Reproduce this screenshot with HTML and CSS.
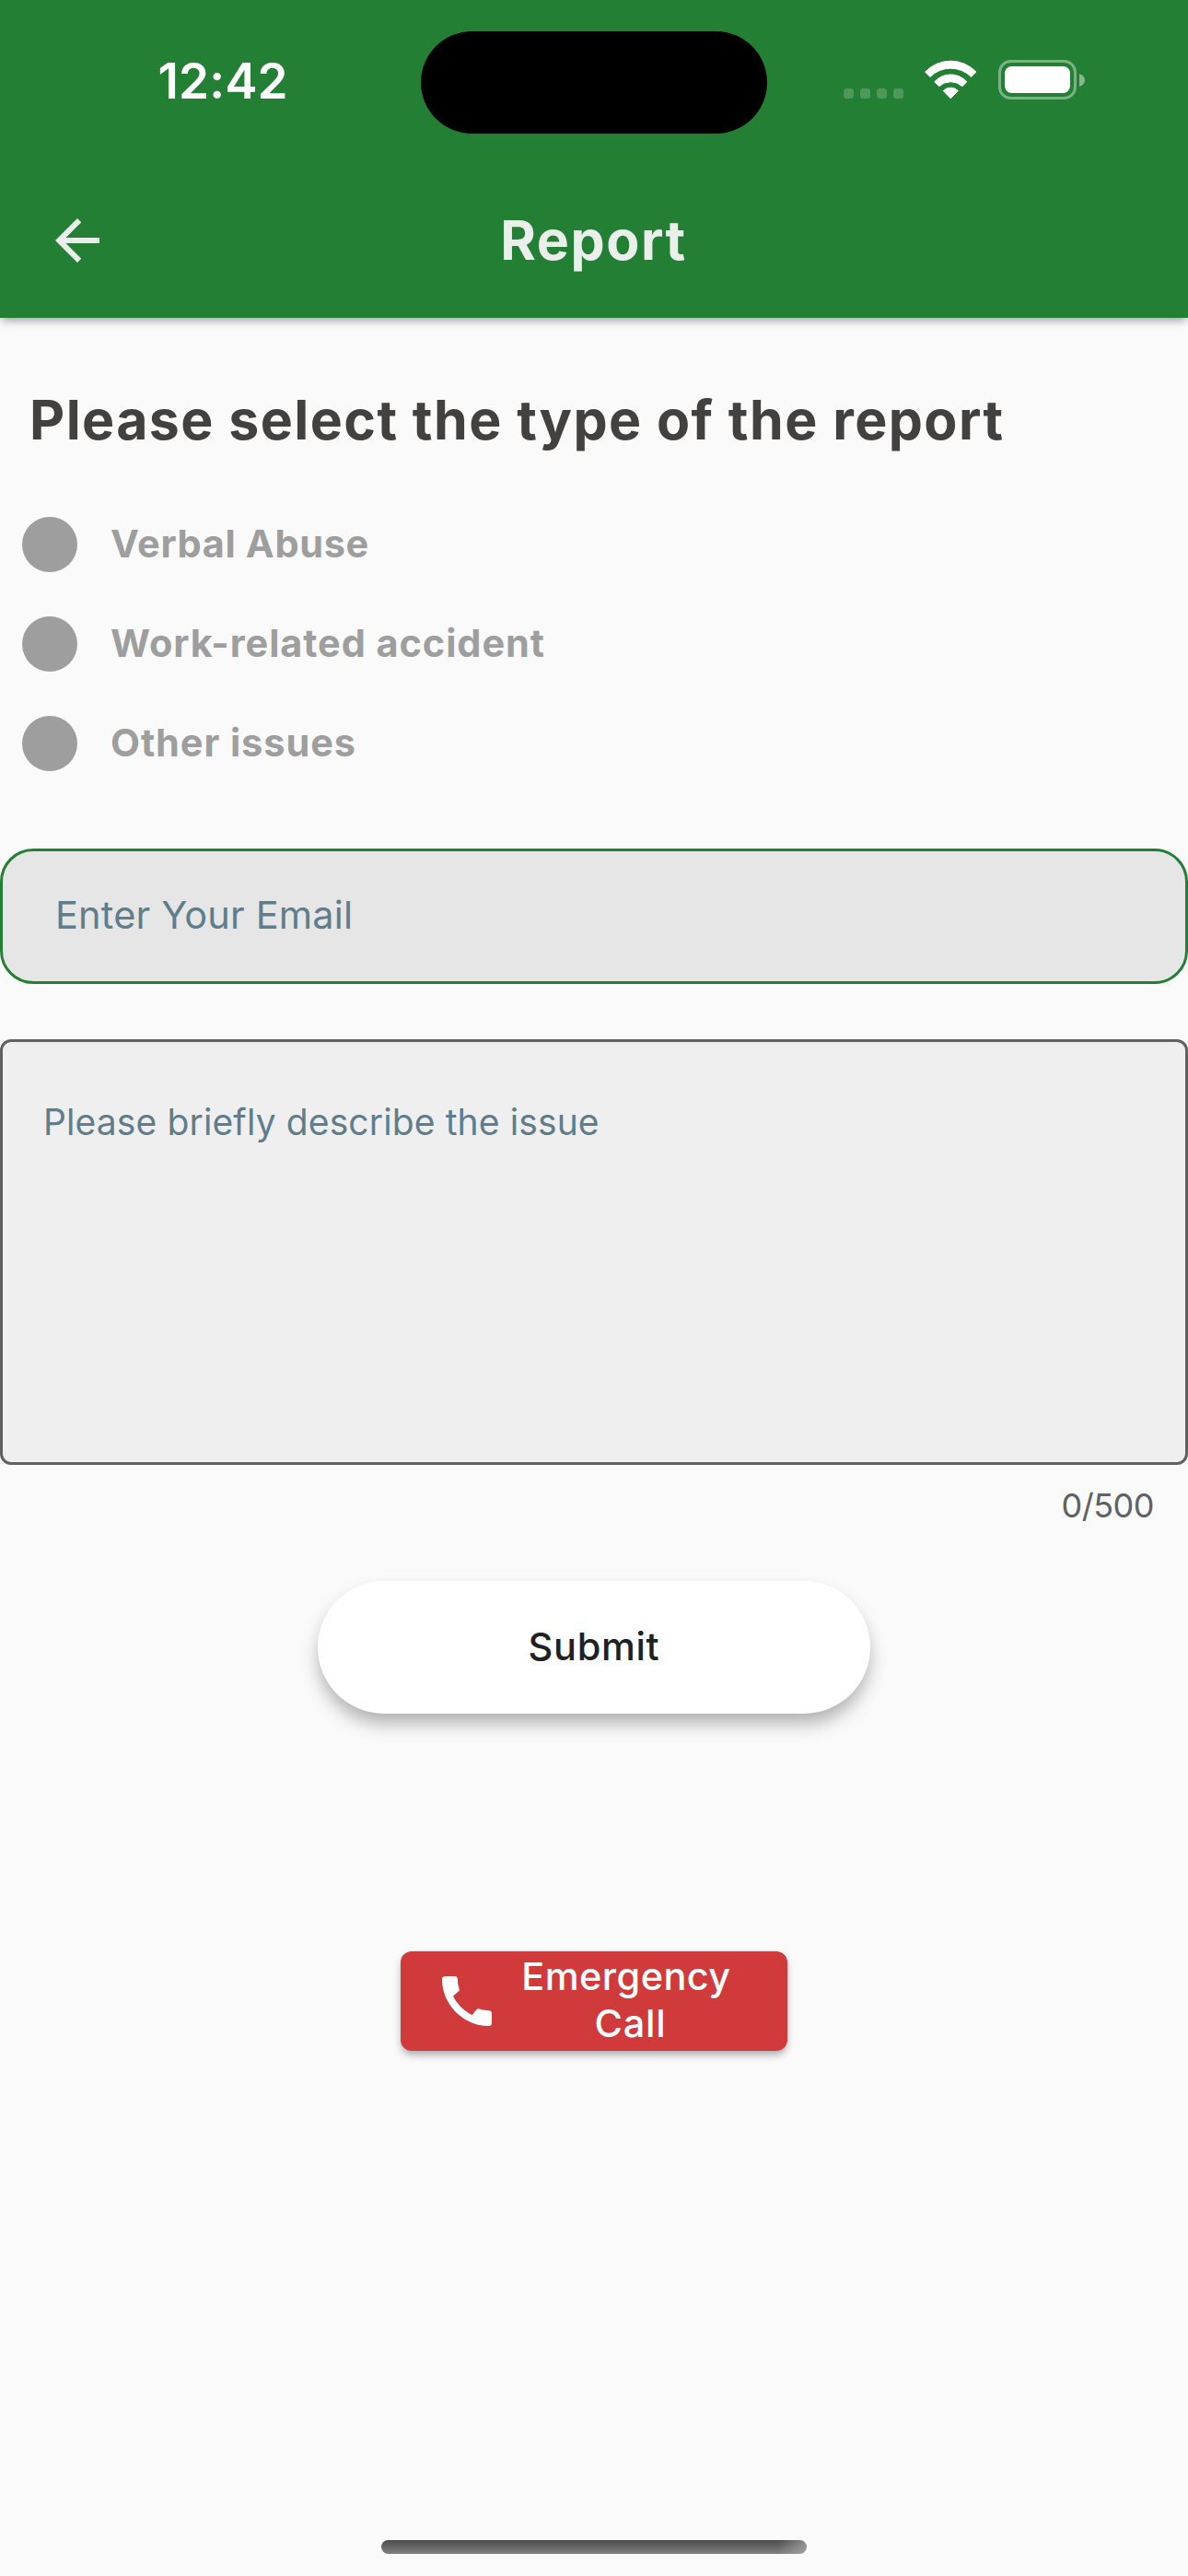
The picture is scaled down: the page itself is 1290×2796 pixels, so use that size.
FILE: index.html
```html
<!DOCTYPE html>
<html lang="en">
<head>
<meta charset="utf-8">
<title>Report</title>
<link rel="stylesheet" href="styles.css">
</head>
<body>
<div class="screen">
  <header class="header">
    <div class="status">
      <span class="time">12:42</span>
      <span class="island"></span>
      <svg class="indicators" width="264" height="46" viewBox="0 0 264 46">
        <g fill="#fff" fill-opacity=".2">
          <rect x="1" y="32" width="11" height="11" rx="3.5"/>
          <rect x="19" y="32" width="11" height="11" rx="3.5"/>
          <rect x="37" y="32" width="11" height="11" rx="3.5"/>
          <rect x="55" y="32" width="11" height="11" rx="3.5"/>
        </g>
        <g fill="#fff" stroke="#fff" stroke-linejoin="round">
          <path d="M89.6 14.1A38.2 38.2 0 0 1 145 14.1L139.6 19.4A31.5 31.5 0 0 0 95 19.4Z"/>
          <path d="M99.7 24.8A23.6 23.6 0 0 1 134.9 24.8L129.9 29.7A18.5 18.5 0 0 0 104.7 29.7Z"/>
          <path d="M109.3 34.6A11 11 0 0 1 125.3 34.6L117.3 42.800Z"/>
        </g>
        <rect x="170.500" y="2.500" width="82" height="40" rx="12" fill="none" stroke="#fff" stroke-opacity=".4" stroke-width="3"/>
        <rect x="176" y="8" width="71" height="29" rx="7.500" fill="#fff"/>
        <path d="M257 16C265 18.500 265 27.500 257 30Z" fill="#fff" fill-opacity=".45"/>
      </svg>
    </div>
    <div class="appbar">
      <svg class="back" width="72" height="72" viewBox="0 0 24 24"><path d="M20 11H7.830l5.590-5.590L12 4l-8 8 8 8 1.410-1.410L7.830 13H20v-2z" fill="#ebefec"/></svg>
      <h1 class="title">Report</h1>
    </div>
  </header>

  <main class="content">
    <h2 class="question">Please select the type of the report</h2>
    <ul class="options">
      <li class="option verbal"><i class="radio"></i><span>Verbal Abuse</span></li>
      <li class="option accident"><i class="radio"></i><span>Work-related accident</span></li>
      <li class="option other"><i class="radio"></i><span>Other issues</span></li>
    </ul>
    <div class="email">Enter Your Email</div>
    <div class="description">Please briefly describe the issue</div>
    <div class="counter">0/500</div>
    <div class="submit">Submit</div>
    <div class="emergency">
      <svg class="phone" width="72" height="72" viewBox="0 0 24 24"><path d="M20.010 15.380c-1.230 0-2.420-.2-3.530-.56-.35-.12-.74-.03-1.010.24l-1.570 1.970c-2.830-1.350-5.480-3.900-6.890-6.830l1.950-1.660c.27-.28.35-.67.24-1.020-.37-1.110-.56-2.300-.56-3.530 0-.54-.45-.99-.99-.99H4.190C3.650 3 3 3.240 3 3.990 3 13.280 10.730 21 20.010 21c.71 0 .99-.63.99-1.180v-3.450c0-.54-.45-.99-.99-.99z" fill="#fff"/></svg>
      <div class="emergency-text">
        <span>Emergency</span>
        <span class="second-line">Call</span>
      </div>
    </div>
  </main>
  <div class="home"></div>
</div>
</body>
</html>
```
FILE: styles.css
```css
* { box-sizing: border-box; }
body {
  margin: 0;
  background: #fafafa;
  font-family: Inter, "Liberation Sans", sans-serif;
}
.screen {
  width: 1290px;
  height: 2796px;
  display: flex;
  flex-direction: column;
  overflow: hidden;
  background: #fafafa;
}
.header {
  height: 345px;
  flex: none;
  background: #237f34;
  box-shadow: 0 5px 9px -2px rgba(0, 0, 0, .36);
}
.status {
  height: 177px;
  display: grid;
  grid-template-columns: 457px 376px 1fr;
  align-items: center;
}
.time {
  padding: 0 0 2px 171.5px;
  color: #fff;
  font-size: 53px;
  font-weight: 600;
  letter-spacing: .1px;
}
.island {
  height: 111px;
  margin-top: 1px;
  border-radius: 56px;
  background: #000;
}
.indicators {
  margin: 0 0 3px 82px;
}
.appbar {
  height: 168px;
  padding: 0 48px;
  display: grid;
  grid-template-columns: 72px 1fr 72px;
  align-items: center;
}
.title {
  margin: 0;
  padding: 0 1px 2px 0;
  text-align: center;
  color: #ebefec;
  font-size: 59px;
  font-weight: 700;
  letter-spacing: 1.5px;
}
.content {
  flex: 1;
  display: flex;
  flex-direction: column;
}
.question {
  margin: 75px 0 0 32px;
  color: #424140;
  font-size: 59px;
  line-height: 72px;
  font-weight: 700;
  letter-spacing: 1.42px;
  white-space: nowrap;
}
.options {
  margin: 69px 0 0;
  padding: 0 24px;
  list-style: none;
  display: flex;
  flex-direction: column;
  gap: 48px;
}
.option {
  height: 60px;
  display: flex;
  align-items: center;
  gap: 36px;
  color: #9e9e9e;
  font-size: 41.5px;
  font-weight: 700;
}
.option span { padding-bottom: 2px; }
.verbal { letter-spacing: .62px; }
.accident { letter-spacing: .92px; }
.other { letter-spacing: .9px; }
.radio {
  width: 60px;
  height: 60px;
  border-radius: 50%;
  background: #9e9e9e;
}
.email {
  height: 147px;
  margin-top: 84px;
  padding: 0 57px;
  border: 3px solid #237f34;
  border-radius: 36px;
  background: #e6e6e6;
  color: #607d8b;
  font-size: 41.5px;
  line-height: 138px;
  letter-spacing: .17px;
}
.description {
  height: 462px;
  margin-top: 60px;
  padding: 62px 44px;
  border: 3px solid #616161;
  border-radius: 12px;
  background: #efefef;
  color: #607d8b;
  font-size: 39px;
  line-height: 50px;
  letter-spacing: .12px;
}
.counter {
  margin: 20px 37px 0 0;
  text-align: right;
  color: #616161;
  font-size: 36px;
  line-height: 48px;
  letter-spacing: -.5px;
}
.submit {
  align-self: center;
  width: 600px;
  height: 144px;
  margin-top: 58px;
  border-radius: 72px;
  background: #fff;
  box-shadow: 0 12px 20px -2px rgba(0, 0, 0, .31);
  text-align: center;
  color: #212121;
  font-size: 41.5px;
  line-height: 142px;
  font-weight: 500;
  letter-spacing: .65px;
}
.emergency {
  align-self: center;
  width: 420px;
  height: 108px;
  margin-top: 258px;
  padding-left: 36px;
  display: flex;
  align-items: center;
  gap: 22px;
  border-radius: 12px;
  background: #d13a3b;
  box-shadow: 0 5px 9px -1px rgba(0, 0, 0, .33);
}
.emergency-text {
  width: 230px;
  padding-bottom: 3px;
  display: flex;
  flex-direction: column;
  align-items: center;
  color: #fff;
  font-size: 41.5px;
  line-height: 51px;
  font-weight: 500;
  letter-spacing: .41px;
}
.second-line {
  padding-left: 9px;
  letter-spacing: .8px;
}
.home {
  align-self: center;
  flex: none;
  width: 462px;
  height: 15px;
  margin-bottom: 24px;
  border-radius: 8px;
  background:
    linear-gradient(100deg, rgba(175, 175, 175, 0) 93%, rgba(175, 175, 175, .7) 100%),
    linear-gradient(#4c4c4c, #808080);
}
```
